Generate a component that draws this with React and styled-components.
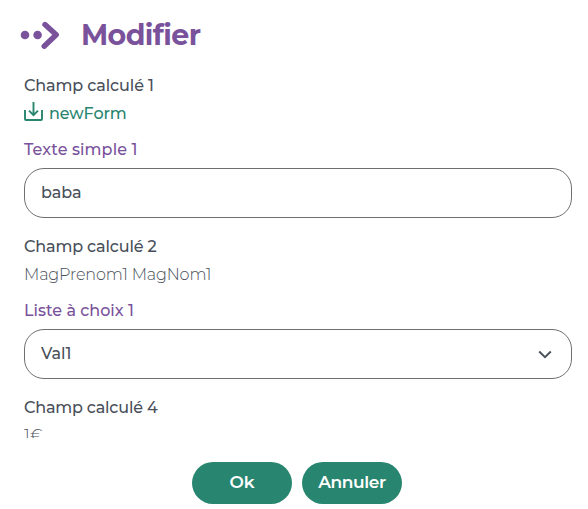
import React, { useState } from 'react';
import styled, { createGlobalStyle } from 'styled-components';

const App = () => {
  const [text, setText] = useState('baba');
  const [choice, setChoice] = useState('Val1');

  return (
    <Dialog>
      <GlobalStyle />
      <Header>
        <TitleIcon viewBox="0 0 40 28">
          <circle cx="5" cy="14" r="4.3" />
          <circle cx="17.6" cy="14" r="4.3" />
          <path d="M25 3.6 36.2 13.8 24.2 25.2" />
        </TitleIcon>
        <Title>Modifier</Title>
      </Header>

      <Body>
        <Label $spacing="-0.12px">Champ calculé 1</Label>
        <FileLink href="#">
          <DownloadIcon viewBox="0 0 19 19">
            <path d="M1 8V17a1 1 0 0 0 1 1h15a1 1 0 0 0 1-1V8" />
            <path d="M9.5 0V13M5 8.7 9.5 13.2 14 8.7" />
          </DownloadIcon>
          <LinkText>newForm</LinkText>
        </FileLink>

        <Label as="label" htmlFor="texte" $editable $spacing="0.1px">Texte simple 1</Label>
        <Input id="texte" value={text} onChange={(e) => setText(e.target.value)} />

        <Label $spacing="-0.16px">Champ calculé 2</Label>
        <Value $spacing="-0.15px">MagPrenom1 MagNom1</Value>

        <Label as="label" htmlFor="liste" $editable $spacing="0px">Liste à choix 1</Label>
        <SelectBox>
          <Select id="liste" value={choice} onChange={(e) => setChoice(e.target.value)}>
            <option>Val1</option>
          </Select>
          <Chevron viewBox="0 0 14 9">
            <path d="M1.2 1.5 7 7.2 12.8 1.5" />
          </Chevron>
        </SelectBox>

        <Label $spacing="-0.2px">Champ calculé 4</Label>
        <Value $spacing="0.3px">1€</Value>
      </Body>

      <Footer>
        <Button>Ok</Button>
        <Button $spacing="-0.4px">Annuler</Button>
      </Footer>
    </Dialog>
  );
};

const GlobalStyle = createGlobalStyle`
  * {
    box-sizing: border-box;
  }

  body {
    margin: 0;
    background: #fff;
    color: #49505a;
    font-family: Montserrat, Inter, sans-serif;
    font-size: 16px;
  }
`;

const Dialog = styled.div`
  display: flex;
  flex-direction: column;
  height: 509px;
  overflow: hidden;
`;

const Header = styled.div`
  display: flex;
  align-items: center;
  gap: 21px;
  height: 71px;
  padding: 0 20px 2px;
`;

const TitleIcon = styled.svg`
  width: 40px;
  height: 28px;
  fill: #79529b;

  path {
    fill: none;
    stroke: #79529b;
    stroke-width: 5.4;
    stroke-linecap: round;
    stroke-linejoin: round;
  }
`;

const Title = styled.h1`
  margin: 0;
  color: #79529b;
  font-size: 28.5px;
  font-weight: 700;
  line-height: 36px;
  letter-spacing: -0.6px;
`;

const Body = styled.div`
  display: flex;
  flex-direction: column;
  height: 367px;
  padding: 0 16px 0 24px;
  overflow: hidden;
`;

const Label = styled.div`
  flex: none;
  align-self: flex-start;
  padding-top: 2px;
  color: ${(props) => (props.$editable ? '#79529b' : '#49505a')};
  font-weight: 500;
  line-height: 26px;
  letter-spacing: ${(props) => props.$spacing};
  margin-bottom: ${(props) => (props.$editable ? '5px' : '0')};
`;

const FileLink = styled.a`
  display: flex;
  flex: none;
  align-items: center;
  gap: 6px;
  height: 28px;
  margin-bottom: 8px;
  color: #28856f;
  font-weight: 500;
  text-decoration: none;
`;

const LinkText = styled.span`
  letter-spacing: -0.1px;
`;

const DownloadIcon = styled.svg`
  width: 19px;
  height: 19px;
  margin-top: -3px;
  fill: none;
  stroke: #28856f;
  stroke-width: 1.9;
`;

const Value = styled.div`
  flex: none;
  height: 28px;
  margin-bottom: 8px;
  padding-top: 2px;
  font-weight: 300;
  line-height: 26px;
  letter-spacing: ${(props) => props.$spacing};
`;

const Input = styled.input`
  flex: none;
  width: 100%;
  height: 50px;
  margin: 0 0 14px;
  padding: 0 16px 2px;
  border: 1px solid #6f6f6f;
  border-radius: 20px;
  outline: none;
  background: #fff;
  color: #49505a;
  font: inherit;
  font-weight: 500;
  letter-spacing: -0.1px;
`;

const SelectBox = styled.div`
  display: flex;
  flex: none;
  align-items: center;
  height: 50px;
  margin-bottom: 14px;
  padding-right: 19px;
  border: 1px solid #6f6f6f;
  border-radius: 20px;
`;

const Select = styled.select`
  flex: 1;
  height: 48px;
  padding: 0 16px 2px;
  border: none;
  outline: none;
  appearance: none;
  background: transparent;
  color: #49505a;
  font: inherit;
  font-weight: 500;
`;

const Chevron = styled.svg`
  width: 14px;
  height: 9px;
  fill: none;
  stroke: #49505a;
  stroke-width: 1.9;
`;

const Footer = styled.div`
  display: flex;
  justify-content: center;
  gap: 10px;
  padding-top: 24px;
  padding-left: 6px;
`;

const Button = styled.button`
  width: 100px;
  height: 42px;
  padding: 0 0 2px;
  border: none;
  border-radius: 21px;
  background: #28856f;
  color: #fff;
  font: inherit;
  font-size: 17px;
  font-weight: 600;
  letter-spacing: ${(props) => props.$spacing || 'normal'};
  cursor: pointer;
`;

export default App;
